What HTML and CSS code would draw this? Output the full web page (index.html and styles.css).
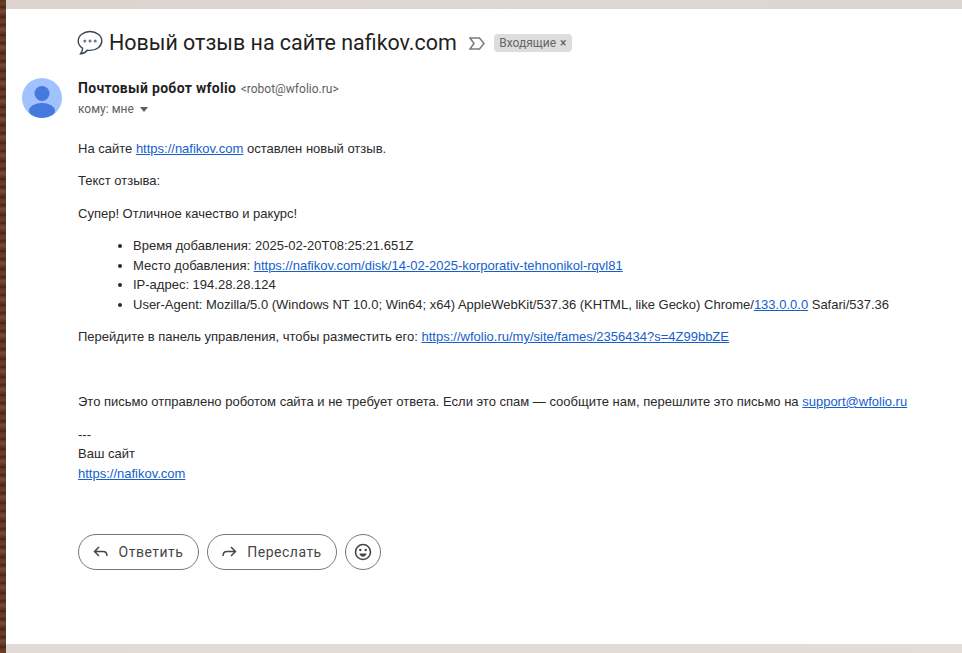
FILE: index.html
```html
<!DOCTYPE html>
<html lang="ru">
<head>
  <meta charset="UTF-8">
  <meta name="viewport" content="width=device-width, initial-scale=1.0">
  <title>Новый отзыв на сайте nafikov.com</title>
  <link rel="stylesheet" href="styles.css">
</head>
<body>
  <div class="wood"></div>
  <div class="page">
    <div class="band"></div>
    <div class="mail">
      <div class="subject-row">
        <svg class="bubble" width="26" height="26" viewBox="0 0 26 26">
          <path d="M13 1.500C6.600 1.500 1.200 5.600 1.200 11c0 3 1.700 5.600 4.400 7.300 0 2.200-.9 4-2 5.400 2.800-.2 5.200-1.600 6.700-3.500.9.200 1.800.2 2.700.2 6.400 0 11.800-4.100 11.800-9.400S19.400 1.500 13 1.500z" fill="#fff" stroke="#37474f" stroke-width="1.400"/>
          <circle cx="7.800" cy="11" r="1.500" fill="#607d8b"/>
          <circle cx="13" cy="11" r="1.500" fill="#607d8b"/>
          <circle cx="18.200" cy="11" r="1.500" fill="#607d8b"/>
        </svg>
        <h1 class="subject">Новый отзыв на сайте nafikov.com</h1>
        <svg class="marker" width="16" height="13" viewBox="0 0 16 13">
          <path d="M1 1h9.500L15 6.500 10.500 12H1l4-5.500z" fill="#fff" stroke="#7a7a7a" stroke-width="1.500"/>
        </svg>
        <span class="label">Входящие <span class="label-x">×</span></span>
      </div>

      <div class="sender-row">
        <svg class="avatar" width="40" height="40" viewBox="0 0 40 40">
          <defs><clipPath id="avatar-clip"><circle cx="20" cy="20" r="20"/></clipPath></defs>
          <circle cx="20" cy="20" r="20" fill="#a0c3ff"/>
          <g clip-path="url(#avatar-clip)">
            <circle cx="20" cy="15.500" r="7.500" fill="#4579dd"/>
            <ellipse cx="20" cy="32.500" rx="13" ry="7.500" fill="#4579dd"/>
          </g>
        </svg>
        <div class="sender">
          <div class="sender-line"><b class="sender-name">Почтовый робот wfolio</b> <span class="sender-mail">&lt;robot@wfolio.ru&gt;</span></div>
          <div class="to-line">кому: мне <span class="caret"></span></div>
        </div>
      </div>

      <div class="body-text">
        <p>На сайте <a href="#">https://nafikov.com</a> оставлен новый отзыв.</p>
        <p>Текст отзыва:</p>
        <p>Супер! Отличное качество и ракурс!</p>
        <ul>
          <li>Время добавления: 2025-02-20T08:25:21.651Z</li>
          <li>Место добавления: <a href="#">https://nafikov.com/disk/14-02-2025-korporativ-tehnonikol-rqvl81</a></li>
          <li>IP-адрес: 194.28.28.124</li>
          <li>User-Agent: Mozilla/5.0 (Windows NT 10.0; Win64; x64) AppleWebKit/537.36 (KHTML, like Gecko) Chrome/<a href="#">133.0.0.0</a> Safari/537.36</li>
        </ul>
        <p>Перейдите в панель управления, чтобы разместить его: <a href="#">https://wfolio.ru/my/site/fames/2356434?s=4Z99bbZE</a></p>
        <p class="notice">Это письмо отправлено роботом сайта и не требует ответа. Если это спам — сообщите нам, перешлите это письмо на <a href="#">support@wfolio.ru</a></p>
        <p>---<br>Ваш сайт<br><a href="#">https://nafikov.com</a></p>
      </div>

      <div class="actions">
        <button class="pill reply" type="button">
          <svg width="18" height="18" viewBox="0 0 18 18"><path d="M7 4L2.500 8.500 7 13M3 8.500h8c2.500 0 4 1.500 4 4.500" fill="none" stroke="#444746" stroke-width="1.500"/></svg>
          Ответить
        </button>
        <button class="pill forward" type="button">
          <svg width="18" height="18" viewBox="0 0 18 18"><path d="M11 4l4.500 4.500L11 13M15 8.500H7c-2.500 0-4 1.500-4 4.500" fill="none" stroke="#444746" stroke-width="1.500"/></svg>
          Переслать
        </button>
        <button class="round" type="button">
          <svg width="20" height="20" viewBox="0 0 20 20">
            <circle cx="10" cy="10" r="7.500" fill="none" stroke="#444746" stroke-width="1.600"/>
            <circle cx="7.300" cy="8" r="1.200" fill="#444746"/>
            <circle cx="12.700" cy="8" r="1.200" fill="#444746"/>
            <path d="M6.300 11.500h7.400c-.5 2-2 3.200-3.700 3.200s-3.200-1.200-3.700-3.200z" fill="#444746"/>
          </svg>
        </button>
      </div>
    </div>
    <div class="band band-bottom"></div>
  </div>
</body>
</html>
```

FILE: styles.css
```css
* {
  box-sizing: border-box;
}

html,
body {
  height: 100%;
}

body {
  margin: 0;
  display: flex;
  overflow: hidden;
  background: #fff;
  font-family: Roboto, Arial, sans-serif;
  color: #222;
}

.wood {
  width: 6px;
  height: 653px;
  flex-shrink: 0;
  background: repeating-linear-gradient(180deg, #5a3222 0, #6e4029 4px, #4a2819 7px, #7a4a33 11px, #5d3524 15px, #43251a 18px);
}

.page {
  flex: 1;
  height: 653px;
  display: flex;
  flex-direction: column;
}

.band {
  height: 9px;
  background: linear-gradient(90deg, #dcd3ce, #ded8d4 50%, #dcd6d2);
}

.band-bottom {
  background: linear-gradient(90deg, #e2dad5, #e4dcd7);
}

.mail {
  flex: 1;
  padding: 17px 0 0 16px;
}

.subject-row {
  display: flex;
  align-items: center;
  height: 34px;
  padding-left: 55px;
}

.bubble {
  margin-right: 6px;
}

.subject {
  margin: 0;
  font-size: 21.450px;
  font-weight: 400;
  line-height: 28px;
  color: #1f1f1f;
}

.marker {
  margin-left: 12px;
}

.label {
  margin-left: 9px;
  height: 18px;
  padding: 0 5.500px;
  border-radius: 4px;
  background: #dddddd;
  color: #666;
  font-size: 12px;
  line-height: 18px;
}

.label-x {
  color: #555;
  margin-left: 1px;
}

.sender-row {
  display: flex;
  margin-top: 18px;
  gap: 16px;
}

.sender-line {
  font-size: 14px;
  line-height: 20px;
}

.sender-name {
  font-weight: 700;
  letter-spacing: 0.3px;
  margin-right: 1px;
  color: #1f1f1f;
}

.sender-mail {
  font-size: 12px;
  color: #5e5e5e;
}

.to-line {
  font-size: 12px;
  line-height: 20px;
  color: #5e5e5e;
}

.caret {
  display: inline-block;
  margin-left: 3px;
  vertical-align: middle;
  border-top: 5px solid #5e5e5e;
  border-left: 4.500px solid transparent;
  border-right: 4.500px solid transparent;
}

.body-text {
  margin-top: 19.500px;
  padding-left: 56px;
  font-family: Arial, "Liberation Sans", sans-serif;
  font-size: 13px;
  line-height: 19.500px;
  color: #2a2a2a;
}

.body-text p {
  margin: 0 0 13px;
}

.body-text ul {
  margin: 0 0 13px;
  padding-left: 55px;
}

.body-text a {
  color: #1560cc;
}

.body-text .notice {
  margin-top: 45.500px;
}

.actions {
  display: flex;
  gap: 8px;
  margin-top: 50.500px;
  padding-left: 56px;
}

.pill,
.round {
  display: flex;
  align-items: center;
  justify-content: center;
  height: 36px;
  border: 1px solid #747775;
  border-radius: 18px;
  background: #fff;
  color: #444746;
  font-family: Roboto, Arial, sans-serif;
  font-size: 14px;
  letter-spacing: 0.5px;
  padding: 0;
}

.pill {
  gap: 9px;
}

.reply {
  width: 121px;
  padding-right: 2px;
}

.forward {
  width: 130px;
  padding-right: 2px;
}

.round {
  width: 36px;
}
```
